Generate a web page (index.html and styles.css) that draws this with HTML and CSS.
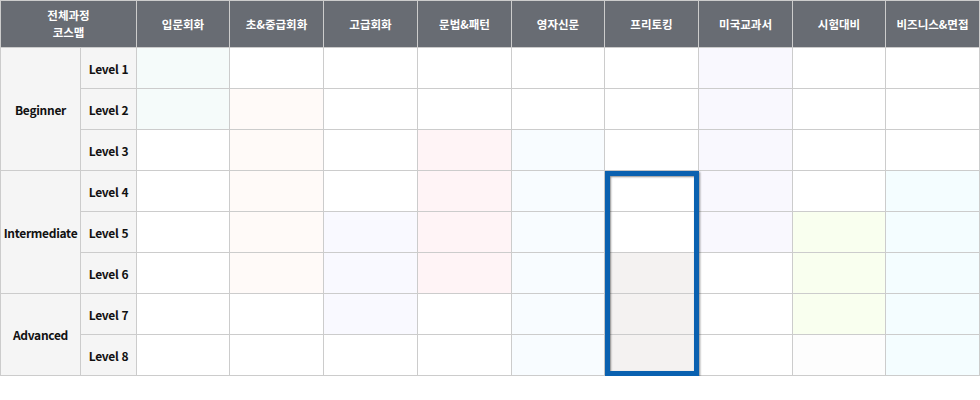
FILE: index.html
```html
<!DOCTYPE html>
<html lang="ko">
<head>
<meta charset="utf-8">
<title>전체과정 코스맵</title>
<link rel="stylesheet" href="styles.css">
</head>
<body>
<div class="map">
  <table class="course-table">
    <colgroup>
      <col class="c-group">
      <col class="c-level">
      <col class="c-93">
      <col class="c-94">
      <col class="c-94">
      <col class="c-94">
      <col class="c-93">
      <col class="c-94">
      <col class="c-94">
      <col class="c-93">
      <col class="c-94">
    </colgroup>
    <thead>
      <tr>
        <th colspan="2">전체과정<br>코스맵</th>
        <th>입문회화</th>
        <th>초&amp;중급회화</th>
        <th>고급회화</th>
        <th>문법&amp;패턴</th>
        <th>영자신문</th>
        <th>프리토킹</th>
        <th>미국교과서</th>
        <th>시험대비</th>
        <th>비즈니스&amp;면접</th>
      </tr>
    </thead>
    <tbody>
      <tr>
        <td class="grp" rowspan="3">Beginner</td>
        <td class="lvl">Level 1</td>
        <td class="mint"></td><td></td><td></td><td></td><td></td><td></td><td class="lav2"></td><td></td><td></td>
      </tr>
      <tr>
        <td class="lvl">Level 2</td>
        <td class="mint"></td><td class="peach"></td><td></td><td></td><td></td><td></td><td class="lav2"></td><td></td><td></td>
      </tr>
      <tr>
        <td class="lvl">Level 3</td>
        <td></td><td class="peach"></td><td></td><td class="pink"></td><td class="sky"></td><td></td><td class="lav2"></td><td></td><td></td>
      </tr>
      <tr>
        <td class="grp" rowspan="3">Intermediate</td>
        <td class="lvl">Level 4</td>
        <td></td><td class="peach"></td><td></td><td class="pink"></td><td class="sky"></td><td></td><td class="lav2"></td><td></td><td class="cyan"></td>
      </tr>
      <tr>
        <td class="lvl">Level 5</td>
        <td></td><td class="peach"></td><td class="lav"></td><td class="pink"></td><td class="sky"></td><td></td><td class="lav2"></td><td class="lime"></td><td class="cyan"></td>
      </tr>
      <tr>
        <td class="lvl">Level 6</td>
        <td></td><td class="peach"></td><td class="lav"></td><td class="pink"></td><td class="sky"></td><td class="beige"></td><td></td><td class="lime"></td><td class="cyan"></td>
      </tr>
      <tr>
        <td class="grp" rowspan="2">Advanced</td>
        <td class="lvl">Level 7</td>
        <td></td><td></td><td class="lav"></td><td></td><td class="sky"></td><td class="beige"></td><td></td><td class="lime"></td><td class="cyan"></td>
      </tr>
      <tr>
        <td class="lvl">Level 8</td>
        <td></td><td></td><td></td><td></td><td class="sky"></td><td class="beige"></td><td></td><td class="faint"></td><td class="cyan"></td>
      </tr>
    </tbody>
  </table>
  <div class="highlight"></div>
</div>
</body>
</html>
```

FILE: styles.css
```css
html, body {
  margin: 0;
  padding: 0;
  background: #ffffff;
}

.map {
  position: relative;
  width: 980px;
}

.course-table {
  width: 980px;
  table-layout: fixed;
  border-collapse: separate;
  border-spacing: 0;
  border-top: 1px solid #cccccc;
  border-left: 1px solid #cccccc;
  font-family: "Noto Sans CJK KR", "Noto Sans", sans-serif;
  font-size: 12px;
  letter-spacing: -0.3px;
  font-weight: 700;
  color: #111111;
}

.c-group { width: 80px; }
.c-level { width: 56px; }
.c-93 { width: 93px; }
.c-94 { width: 94px; }

.course-table th,
.course-table td {
  padding: 0;
  border-right: 1px solid #cccccc;
  border-bottom: 1px solid #cccccc;
  text-align: center;
  vertical-align: middle;
}

.course-table th {
  height: 46px;
  background: #686c73;
  color: #ffffff;
  font-size: 11.5px;
  letter-spacing: 0;
  line-height: 17px;
}

.course-table td {
  height: 40px;
}

.grp,
.lvl {
  background: #f5f5f5;
}

.mint  { background: #f5fbfa; }
.peach { background: #fffaf8; }
.lav   { background: #f9f9ff; }
.lav2  { background: #f9f8fe; }
.pink  { background: #fff4f6; }
.sky   { background: #f8fcff; }
.beige { background: #f4f2f1; }
.lime  { background: #f9ffef; }
.cyan  { background: #f4fdff; }
.faint { background: #fdfdfd; }

.highlight {
  position: absolute;
  left: 605px;
  top: 171px;
  width: 94px;
  height: 205px;
  box-sizing: border-box;
  border: 5px solid #0a61b0;
  box-shadow: 1px 1px 2px rgba(0, 0, 0, 0.45), inset 1px 1px 2px rgba(0, 0, 0, 0.45);
  pointer-events: none;
}
```
